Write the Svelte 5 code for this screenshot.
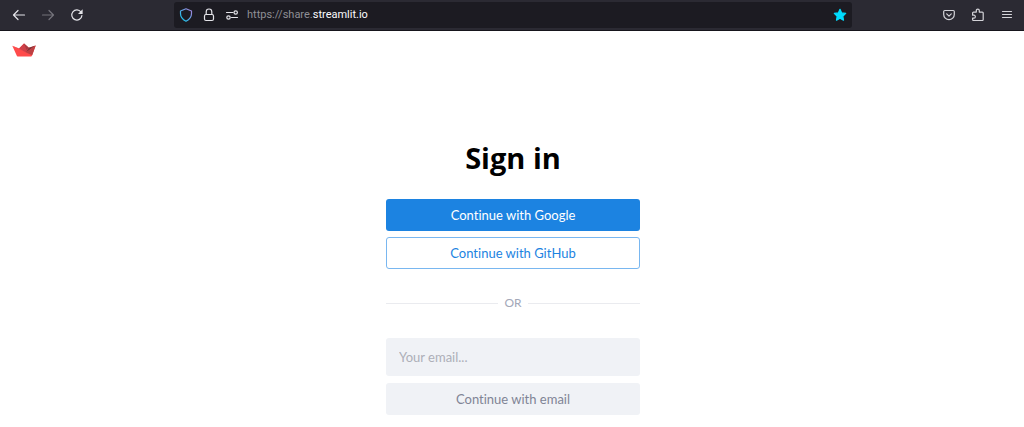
<script>
  let email = $state('');
</script>

<header class="toolbar">
  <nav class="history" aria-label="History">
    <button class="tool" aria-label="Back">
      <svg viewBox="0 0 16 16"><path d="M13.500 8H2.500M7 3.500 2.500 8 7 12.500" /></svg>
    </button>
    <button class="tool dim" aria-label="Forward" disabled>
      <svg viewBox="0 0 16 16"><path d="M2.500 8h11M9 3.500 13.500 8 9 12.500" /></svg>
    </button>
    <button class="tool" aria-label="Reload">
      <svg viewBox="0 0 16 16"><path d="M12 5A5.100 5.100 0 1 0 12.900 8.600" /><path class="solid" d="M13.600 2.300v4.600H9z" /></svg>
    </button>
  </nav>

  <div class="address">
    <button class="tool" aria-label="Tracking protection">
      <svg viewBox="0 0 16 16">
        <defs>
          <linearGradient id="shield" x1="0" y1="1" x2="1" y2="0">
            <stop offset="0.150" stop-color="#20c5ee" />
            <stop offset="0.850" stop-color="#9788dc" />
          </linearGradient>
        </defs>
        <path stroke="url(#shield)" d="M8 1.800 13.500 4v2.600c0 3.400-2.200 6.100-5.500 7.600C4.700 12.700 2.500 10 2.500 6.600V4z" />
      </svg>
    </button>
    <button class="tool" aria-label="Connection secure">
      <svg viewBox="0 0 16 16"><rect x="3.500" y="7.500" width="9" height="6" rx="1.500" /><path d="M5.200 7.500V4.800a2.800 2.800 0 0 1 5.600 0v2.700" /></svg>
    </button>
    <button class="tool" aria-label="Permissions">
      <svg viewBox="0 0 16 16"><path d="M2.500 5.500h6.500M7.500 10.500h6" /><circle cx="11.700" cy="5.500" r="1.700" /><circle cx="4.500" cy="10.500" r="1.700" /></svg>
    </button>
    <span class="url">https://share.<b>streamlit.io</b></span>
    <button class="tool star" aria-label="Edit bookmark">
      <svg viewBox="0 0 16 16"><path d="m8 2.300 1.700 3.600 4 .5-2.900 2.800.7 4L8 11.300l-3.500 1.900.7-4-2.900-2.800 4-.5z" /></svg>
    </button>
  </div>

  <div class="actions">
    <button class="tool" aria-label="Save to Pocket">
      <svg viewBox="0 0 16 16"><path d="M3.800 3.500h8.400a1.100 1.100 0 0 1 1.100 1.100v2.800a5.300 5.300 0 0 1-10.600 0V4.600a1.100 1.100 0 0 1 1.100-1.100z" /><path d="M5.700 6.900 8 9.100l2.300-2.200" /></svg>
    </button>
    <button class="tool" aria-label="Extensions">
      <svg viewBox="0 0 16 16"><path d="M3.500 5.100h2.800V3.600a1.500 1.500 0 0 1 3 0v1.500h3a.9.900 0 0 1 .9.900v6.600a.9.900 0 0 1-.9.900H3.500a.9.900 0 0 1-.9-.9v-1.500h1.300a1.400 1.400 0 0 0 0-2.900H2.600V6a.9.900 0 0 1 .9-.9z" /></svg>
    </button>
    <button class="tool" aria-label="Open application menu">
      <svg viewBox="0 0 16 16"><path d="M3.500 4.500h9M3.500 7.500h9M3.500 10.500h9" /></svg>
    </button>
  </div>
</header>

<div class="page">
  <a class="logo" href="/" aria-label="Streamlit">
    <svg viewBox="0 0 24 14">
      <path fill="#ff4b4b" d="M.3 2.800 7 5.600 12 .6l4.700 4.200 7-2.300L20 12.600c-.2.600-.5.900-1 .9H5.700c-.5 0-.8-.3-1-.9z" />
      <path fill="#cf4049" d="M12 .6 7 5.600 14 9.500l2.700-4.700z" />
      <path fill="#a83b42" d="M12 .6 14.500 7 16.700 4.800z" />
      <path fill="#7d353b" d="m16.700 4.800 7-2.300L14 9.500z" />
      <path fill="#bd4043" d="M23.700 2.500 14 9.500l6.200 2.700z" />
      <path fill="#e5484d" d="M.3 2.800 7 5.600l7 3.900z" />
    </svg>
  </a>

  <main>
    <h1>Sign in</h1>
    <form onsubmit={(event) => event.preventDefault()}>
      <button class="btn primary" type="button">Continue with Google</button>
      <button class="btn outline" type="button">Continue with GitHub</button>
      <div class="divider"><span>OR</span></div>
      <input type="email" aria-label="Your email" placeholder="Your email..." bind:value={email} />
      <button class="btn muted" type="submit" disabled={!email}>Continue with email</button>
    </form>
  </main>
</div>

<style>
  :global(body) {
    margin: 0;
    background: #fff;
  }

  button,
  input {
    box-sizing: border-box;
    margin: 0;
    font: inherit;
  }

  .toolbar {
    box-sizing: border-box;
    display: grid;
    grid-template-columns: 174px 1fr 172px;
    align-items: center;
    height: 31px;
    background: #2b2a33;
    border-bottom: 1px solid #16151c;
  }

  .history,
  .actions {
    display: flex;
    align-items: center;
    gap: 13px;
  }

  .history {
    padding-left: 11px;
  }

  .actions {
    justify-content: flex-end;
    padding-right: 9px;
  }

  .tool {
    display: flex;
    flex: none;
    width: 16px;
    padding: 0;
    border: 0;
    background: none;
    color: #e4e4e9;
  }

  .tool svg {
    width: 16px;
    height: 16px;
    fill: none;
    stroke: currentColor;
    stroke-width: 1.2;
    stroke-linecap: round;
    stroke-linejoin: round;
  }

  .tool .solid {
    fill: currentColor;
    stroke: none;
  }

  .dim {
    color: #74737b;
  }

  .actions .tool {
    color: #d4d4d9;
  }

  .address {
    display: flex;
    align-items: center;
    gap: 7px;
    height: 26px;
    padding: 0 4px;
    border-radius: 3px;
    background: #1c1b22;
  }

  .url {
    flex: 1;
    font: 11px/16px Roboto, "Noto Sans", sans-serif;
    color: #8f8f95;
  }

  .url b {
    font-weight: 400;
    color: #fbfbfe;
  }

  .star {
    color: #00ddff;
  }

  .star svg {
    fill: currentColor;
  }

  .page {
    padding: 12px;
    font-family: Lato, "Open Sans", sans-serif;
    font-variant-ligatures: none;
  }

  .logo {
    display: block;
    width: 24px;
  }

  .logo svg {
    display: block;
    width: 24px;
    height: 14px;
  }

  main {
    max-width: 254px;
    margin: 0 auto;
    padding: 82px 0 0 2px;
  }

  h1 {
    margin: 0 0 22px;
    font: 700 29px/38px "Open Sans", sans-serif;
    text-align: center;
    color: #000;
  }

  form {
    display: flex;
    flex-direction: column;
    font-size: 13px;
    line-height: 20px;
  }

  .btn {
    height: 32px;
    margin-bottom: 6px;
    padding: 0 12px;
    border: 1px solid transparent;
    border-radius: 3px;
    text-align: center;
  }

  .primary {
    background: #1c83e1;
    color: #fff;
  }

  .outline {
    border-color: #79b7f0;
    background: #fff;
    color: #1c83e1;
  }

  .divider {
    display: flex;
    align-items: center;
    gap: 6px;
    margin: 18px 0 25px;
    font-size: 12px;
    color: #a3a8b8;
  }

  .divider::before,
  .divider::after {
    content: "";
    flex: 1;
    height: 1px;
    background: #eaebef;
  }

  input {
    height: 38px;
    margin-bottom: 7px;
    padding: 0 13px;
    border: 0;
    border-radius: 3px;
    background: #f0f2f6;
    color: #31333f;
  }

  input::placeholder {
    color: #adafb8;
    opacity: 1;
  }

  .muted {
    background: #f0f2f6;
    color: #808495;
  }
</style>
